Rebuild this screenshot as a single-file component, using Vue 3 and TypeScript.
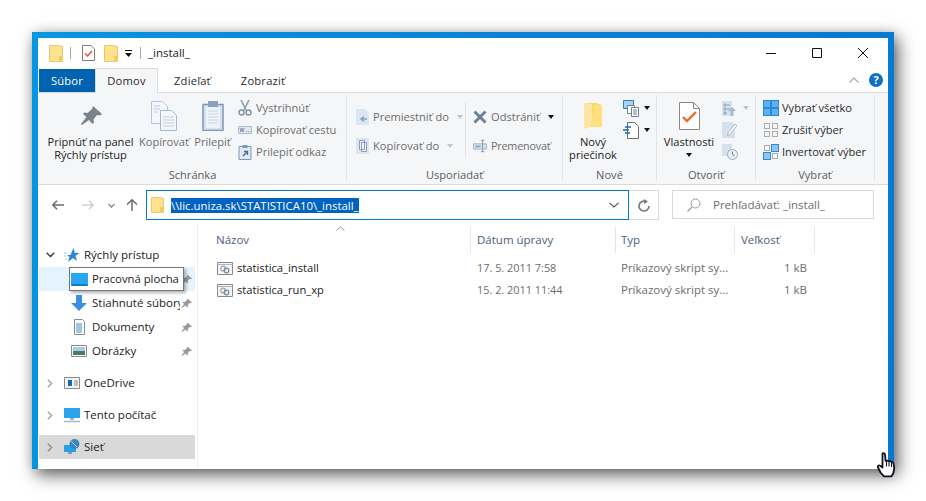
<script setup lang="ts">
const tools = [
  { label: 'Vybrať všetko', cells: ['#5fb0ee', '#5fb0ee', '#5fb0ee', '#5fb0ee'] },
  { label: 'Zrušiť výber', cells: ['none', 'none', 'none', 'none'] },
  { label: 'Invertovať výber', cells: ['none', '#8cc6f2', '#8cc6f2', 'none'] }
]
const files = [
  { name: 'statistica_install', date: '17. 5. 2011 7:58' },
  { name: 'statistica_run_xp', date: '15. 2. 2011 11:44' }
]
const cols = ['Názov', 'Dátum úpravy', 'Typ', 'Veľkosť']
const slots = [
  { x: 0.5, y: 0.5 },
  { x: 8.5, y: 0.5 },
  { x: 0.5, y: 8.5 },
  { x: 8.5, y: 8.5 }
]
</script>

<template>
  <div class="window">
    <div class="inner">
      <header class="titlebar">
        <svg width="14" height="17" viewBox="0 0 14 17"><path d="M.5.500h9l4 1v15H.5z" fill="#ffe28c" stroke="#e9c76e"/><path d="M10 11h3.500v5.500H10z" fill="#f4cd60"/></svg>
        <i class="tsep"></i>
        <svg width="13" height="16" viewBox="0 0 13 16"><path d="M.5.500h8.500l3.500 3.500v11.500H.5z" fill="#fff" stroke="#7d7d7d"/><path d="M3 8.500l2.500 2.500L10 6" fill="none" stroke="#e2572b" stroke-width="1.500"/></svg>
        <svg class="ic-q3" width="14" height="17" viewBox="0 0 14 17"><path d="M.5.500h9l4 1v15H.5z" fill="#ffe28c" stroke="#e9c76e"/><path d="M10 11h3.500v5.500H10z" fill="#f4cd60"/></svg>
        <svg class="ic-q4" width="7" height="7" viewBox="0 0 7 7"><path d="M0 0h7v1H0zM0 3h7L3.500 7z" fill="#111"/></svg>
        <i class="tsep tsep2"></i>
        <span class="wintitle">_install_</span>
        <div class="controls">
          <svg width="46" height="30" viewBox="0 0 46 30"><path d="M18 15.500h10" stroke="#111"/></svg>
          <svg width="46" height="30" viewBox="0 0 46 30"><path d="M18.500 10.500h9v9h-9z" fill="none" stroke="#111"/></svg>
          <svg width="46" height="30" viewBox="0 0 46 30"><path d="M18 10l10 10M28 10L18 20" stroke="#111"/></svg>
        </div>
      </header>

      <nav class="tabs">
        <span class="tab file">Súbor</span>
        <span class="tab active">Domov</span>
        <span class="tab share">Zdieľať</span>
        <span class="tab view">Zobraziť</span>
        <div class="tabs-right">
          <svg width="10" height="6" viewBox="0 0 10 6"><path d="M.5 5.500L5 1l4.500 4.500" fill="none" stroke="#a8a8a8" stroke-width="1.200"/></svg>
          <span class="help">?</span>
        </div>
      </nav>

      <section class="ribbon">
        <div class="group g1">
          <div class="body">
            <div class="big b-pin">
              <div class="bigicon"><svg width="22" height="20" viewBox="0 0 22 20"><path d="M13 0l9 8-2 1.500-3-.5-3.500 4.500.5 3-1.500 1.500-3.500-4L2 19l-1-1 5.500-7-3.500-3L4.500 6.500l3 .5L12 3z" fill="#7a838b"/></svg></div>
              <span>Pripnúť na panel</span><span>Rýchly prístup</span>
            </div>
            <div class="big b-copy dim">
              <div class="bigicon"><svg width="26" height="30" viewBox="0 0 26 30"><path d="M.5.500h11l5 5v17H.500z" fill="#f3f6fa" stroke="#b9c6d6"/><path d="M9.500 9.500h11l5 5v15h-16z" fill="#f3f6fa" stroke="#a9b9cd"/><path d="M12 16h11M12 19h11M12 22h11M12 25h11M3 5h6M3 8h6M3 11h4" stroke="#c2cedd"/></svg></div>
              <span>Kopírovať</span>
            </div>
            <div class="big b-paste dim">
              <div class="bigicon"><svg width="22" height="30" viewBox="0 0 22 30"><path d="M1 3.500h20v26H1z" fill="#d5e0ef" stroke="#7f97b6" stroke-width="1.500"/><path d="M4 6h14v21H4z" fill="#eef3f9"/><path d="M6 0h10v6H6z" fill="#8ba2bf"/><path d="M6 10h10M6 13h10M6 16h10M6 19h10M6 22h10" stroke="#c8d5e6"/></svg></div>
              <span>Prilepiť</span>
            </div>
            <div class="smalls s1">
              <div class="small dim"><svg width="14" height="16" viewBox="0 0 14 16"><path d="M3 0l5 10M11 0L6 10" stroke="#8d9db2" stroke-width="1.600"/><circle cx="3.500" cy="12.500" r="2.500" fill="none" stroke="#7c8fa8" stroke-width="1.400"/><circle cx="10.500" cy="12.500" r="2.500" fill="none" stroke="#7c8fa8" stroke-width="1.400"/></svg><span>Vystrihnúť</span></div>
              <div class="small dim"><svg width="14" height="8" viewBox="0 0 14 8"><path d="M.5.500h13v7H.5z" fill="#dfe8f3" stroke="#aebccd"/><path d="M2 2l1 4 1-4 1 4 1-4M8 5.500h1M10 5.500h1M12 5.500h.5" fill="none" stroke="#7c8a9c" stroke-width=".8"/></svg><span>Kopírovať cestu</span></div>
              <div class="small dim"><svg width="13" height="15" viewBox="0 0 13 15"><path d="M.5 1.500h12v13H.5z" fill="#dfe8f3" stroke="#7f97b6"/><path d="M4 0h5v3H4z" fill="#7f97b6"/><path d="M4.500 11L8 7.500M5.500 6.500H9v3.500" fill="none" stroke="#4f6785" stroke-width="1.300"/></svg><span>Prilepiť odkaz</span></div>
            </div>
          </div>
          <div class="glabel">Schránka</div>
        </div>

        <div class="group g2">
          <div class="body">
            <div class="tall c1">
              <div class="small dim"><svg width="13" height="16" viewBox="0 0 13 16"><path d="M0 0h9l4 4v12H0z" fill="#dce6f2"/><path d="M11 10H5M8 7.500L5 10l3 2.500" fill="none" stroke="#8da0b8" stroke-width="1.500"/></svg><span>Premiestniť do</span><i class="caret off"></i></div>
              <div class="small dim"><svg width="13" height="16" viewBox="0 0 13 16"><path d="M0 0h13v16H0z" fill="#dce6f2"/><path d="M3.500 2.500h5v9h-5zM5.500 4.500h5v9h-5z" fill="#eef3f9" stroke="#8da0b8"/></svg><span>Kopírovať do</span><i class="caret off"></i></div>
            </div>
            <i class="rsep"></i>
            <div class="tall c2">
              <div class="small dim"><svg width="14" height="14" viewBox="0 0 14 14"><path d="M1.500 1.500l11 11M12.500 1.500l-11 11" stroke="#6f8198" stroke-width="3"/></svg><span>Odstrániť</span><i class="caret"></i></div>
              <div class="small dim"><svg width="14" height="14" viewBox="0 0 16 14"><path d="M.5 4.500h15v6H.5z" fill="#d8e2ef" stroke="#9fb0c6"/><path d="M2.500 6.500h6v2h-6z" fill="#8fa3bc"/><path d="M9 .5h4M11 .5v13M9 13.500h4" stroke="#7e90a8" fill="none"/></svg><span class="rename">Premenovať</span></div>
            </div>
          </div>
          <div class="glabel">Usporiadať</div>
        </div>

        <div class="group g3">
          <div class="body">
            <div class="big b-new">
              <div class="bigicon"><svg width="19" height="27" viewBox="0 0 19 27"><path d="M0 0h12l6 2v22H0z" fill="#ffd766"/><path d="M0 0l8 1v22l-8 3z" fill="#fde6a1"/><path d="M11 2h7v22H6z" fill="#ffdf80"/></svg></div>
              <span>Nový</span><span>priečinok</span>
            </div>
            <div class="smalls s3">
              <div class="small"><svg width="16" height="17" viewBox="0 0 16 17"><path d="M.5.500h10v8H.5z" fill="#a9d1f0" stroke="#2f7fbc"/><path d="M4.500 5.500h7v8h-7z" fill="#fff" stroke="#6f8198"/><path d="M8.500 7.500h7v9h-7z" fill="#fff" stroke="#6f8198"/><path d="M10 10h4M10 12h4M10 14h4" stroke="#6f8198"/></svg><i class="caret"></i></div>
              <div class="small"><svg width="16" height="17" viewBox="0 0 16 17"><path d="M4.500.5h7l4 4v12h-11z" fill="#fff" stroke="#6d6d6d"/><path d="M2 5h6M0 8h6M2 11h5" stroke="#0f6cbd" stroke-width="1.300"/></svg><i class="caret"></i></div>
            </div>
          </div>
          <div class="glabel">Nové</div>
        </div>

        <div class="group g4">
          <div class="body">
            <div class="big b-props">
              <div class="bigicon"><svg width="21" height="28" viewBox="0 0 21 28"><path d="M.5.500h14l6 6v21H.5z" fill="#fff" stroke="#8a8a8a"/><path d="M14.500.5v6h6" fill="none" stroke="#8a8a8a"/><path d="M4 15l4 4 9-9" fill="none" stroke="#ef6a22" stroke-width="2.400"/></svg></div>
              <span>Vlastnosti</span>
              <i class="caret under"></i>
            </div>
            <div class="smalls s4">
              <div class="small"><svg width="14" height="15" viewBox="0 0 14 15"><path d="M0 0h10v15H0z" fill="#d6e1ee"/><path d="M2 3h2v2H2zM2 7h2v2H2zM2 11h2v2H2zM5 4h3M5 8h3" stroke="#92a5bd" fill="none"/><path d="M10 6l4 4h-2.500v5h-3v-5H6z" fill="#a8bace"/></svg><i class="caret off"></i></div>
              <div class="small"><svg width="15" height="16" viewBox="0 0 15 16"><path d="M0 0h10l3 3v13H0z" fill="#d6e1ee"/><path d="M6 11l7-9 2 1.500-7 9-2.500 1z" fill="#fff" stroke="#a8bace"/></svg></div>
              <div class="small"><svg width="16" height="16" viewBox="0 0 16 16"><path d="M0 0h10v12H0z" fill="#d6e1ee"/><circle cx="10.500" cy="10.500" r="5" fill="#e8eef5" stroke="#98abc1"/><path d="M10.500 7.500v3l2 1.500" fill="none" stroke="#6f8198"/></svg></div>
            </div>
          </div>
          <div class="glabel">Otvoriť</div>
        </div>

        <div class="group g5">
          <div class="body">
            <div class="smalls s5">
              <div v-for="t in tools" :key="t.label" class="small sel">
                <svg width="16" height="16" viewBox="0 0 16 16">
                  <template v-for="(s, i) in slots" :key="i">
                    <rect v-if="t.cells[i] === 'none'" :x="s.x + 1" :y="s.y + 1" width="5" height="5" fill="#f5f6f7" stroke="#ababab"/>
                    <rect v-else :x="s.x" :y="s.y" width="7" height="7" :fill="t.cells[i]" stroke="#2b8bd9"/>
                  </template>
                </svg>
                <span>{{ t.label }}</span>
              </div>
            </div>
          </div>
          <div class="glabel">Vybrať</div>
        </div>
      </section>

      <div class="addressrow">
        <div class="navbtns">
          <svg width="12" height="10" viewBox="0 0 12 10"><path d="M12 5H1M5 .7L.8 5 5 9.300" fill="none" stroke="#6b6b6b" stroke-width="1.500"/></svg>
          <svg width="12" height="10" viewBox="0 0 12 10"><path d="M0 5h11M7 .7L11.200 5 7 9.300" fill="none" stroke="#cfcfcf" stroke-width="1.500"/></svg>
          <svg width="7" height="5" viewBox="0 0 7 5"><path d="M.5.800L3.500 4l3-3.200" fill="none" stroke="#808080" stroke-width="1.200"/></svg>
          <svg width="12" height="12" viewBox="0 0 12 12"><path d="M6 12V1M1 5.500L6 .8l5 4.700" fill="none" stroke="#6b6b6b" stroke-width="1.500"/></svg>
        </div>
        <div class="address">
          <svg width="13" height="16" viewBox="0 0 13 16"><path d="M.5.500h8l4 1v14H.5z" fill="#ffe28c" stroke="#e9c76e"/><path d="M9 10h3.500v5.500H9z" fill="#f4cd60"/></svg>
          <span class="path">\\lic.uniza.sk\STATISTICA10\_install_</span>
          <svg class="dd" width="10" height="6" viewBox="0 0 10 6"><path d="M.5.800L5 5l4.500-4.200" fill="none" stroke="#555" stroke-width="1.100"/></svg>
        </div>
        <div class="refresh">
          <svg width="12" height="13" viewBox="0 0 12 13"><path d="M7.500 2.300A5 5 0 1 0 11 7" fill="none" stroke="#757575" stroke-width="1.600"/><path d="M6 0l4 2.500L6 5z" fill="#757575"/></svg>
        </div>
        <div class="search">
          <svg width="14" height="14" viewBox="0 0 14 14"><circle cx="8.500" cy="5.500" r="4.500" fill="none" stroke="#9a9a9a"/><path d="M5 9l-4.500 4.500" stroke="#9a9a9a" stroke-width="1.300"/></svg>
          <span>Prehľadávať: _install_</span>
        </div>
      </div>

      <div class="content">
        <aside class="tree">
          <div class="row">
            <span class="arrow"><svg class="chev-d" width="9" height="6" viewBox="0 0 9 6"><path d="M.7.800l3.800 3.800L8.300.8" fill="none" stroke="#3c3c3c" stroke-width="1.400"/></svg></span>
            <svg class="ni" width="16" height="16" viewBox="0 0 16 16"><path d="M9.500 1l1.200 4.700L15.500 6l-4 2.800L13 14 9 11 4 15l1.500-5L3 8h3.500z" fill="#2c87d8"/><path d="M0 6h3M0 9h2M1 12h2" stroke="#9fc9ee"/></svg>
            <span class="lbl">Rýchly prístup</span>
          </div>
          <div class="row sub hover">
            <span class="grow"></span>
            <svg class="pin" width="11" height="11" viewBox="0 0 22 20"><path d="M13 0l9 8-2 1.500-3-.5-3.500 4.500.5 3-1.500 1.500-3.500-4L2 19l-1-1 5.500-7-3.500-3L4.500 6.500l3 .5L12 3z" fill="#9b9b9b"/></svg>
            <div class="tooltip">
              <svg width="17" height="13" viewBox="0 0 17 13"><path d="M0 0h17v13H0z" fill="#1a9be8"/><path d="M0 0h17v11H0z" fill="#27a6f2"/><path d="M1 12h15" stroke="#0d5c96"/></svg>
              <span>Pracovná plocha</span>
            </div>
          </div>
          <div class="row sub">
            <span class="ind"></span>
            <svg class="ni" width="16" height="16" viewBox="0 0 16 16"><path d="M5 0h6v8h5l-8 8-8-8h5z" fill="#3a8fe0"/></svg>
            <span class="lbl clip">Stiahnuté súbory</span>
            <svg class="pin" width="11" height="11" viewBox="0 0 22 20"><path d="M13 0l9 8-2 1.500-3-.5-3.500 4.500.5 3-1.500 1.500-3.500-4L2 19l-1-1 5.500-7-3.500-3L4.500 6.500l3 .5L12 3z" fill="#9b9b9b"/></svg>
          </div>
          <div class="row sub">
            <span class="ind"></span>
            <svg class="ni" width="16" height="16" viewBox="0 0 16 16"><path d="M3.500.5h8l2 2v13h-10z" fill="#fff" stroke="#8a8a8a"/><path d="M5 5h6M5 7h6M5 9h6M5 11h6M5 13h6" stroke="#3a8fd0"/></svg>
            <span class="lbl">Dokumenty</span>
            <svg class="pin" width="11" height="11" viewBox="0 0 22 20"><path d="M13 0l9 8-2 1.500-3-.5-3.500 4.500.5 3-1.500 1.500-3.500-4L2 19l-1-1 5.500-7-3.500-3L4.500 6.500l3 .5L12 3z" fill="#9b9b9b"/></svg>
          </div>
          <div class="row sub">
            <span class="ind"></span>
            <svg class="ni" width="16" height="12" viewBox="0 0 16 12"><path d="M.5.500h15v11H.5z" fill="#fff" stroke="#8a8a8a"/><path d="M2 2h12v4H2z" fill="#a9cdea"/><path d="M2 6h12v4H2z" fill="#4e7b5d"/></svg>
            <span class="lbl">Obrázky</span>
            <svg class="pin" width="11" height="11" viewBox="0 0 22 20"><path d="M13 0l9 8-2 1.500-3-.5-3.500 4.500.5 3-1.500 1.500-3.500-4L2 19l-1-1 5.500-7-3.500-3L4.500 6.500l3 .5L12 3z" fill="#9b9b9b"/></svg>
          </div>
          <div class="row top">
            <span class="arrow"><svg class="chev-r" width="6" height="9" viewBox="0 0 6 9"><path d="M.8.700l3.800 3.800L.8 8.300" fill="none" stroke="#a0a0a0" stroke-width="1.300"/></svg></span>
            <svg class="ni" width="16" height="12" viewBox="0 0 16 12"><path d="M.5.500h15v11H.5z" fill="#f4f4f4" stroke="#8a8a8a"/><path d="M4 3h4v6H4z" fill="#0f6cbd"/><path d="M10 4h4M10 6h4M10 8h4" stroke="#8a8a8a"/></svg>
            <span class="lbl">OneDrive</span>
          </div>
          <div class="row top">
            <span class="arrow"><svg class="chev-r" width="6" height="9" viewBox="0 0 6 9"><path d="M.8.700l3.800 3.800L.8 8.300" fill="none" stroke="#a0a0a0" stroke-width="1.300"/></svg></span>
            <svg class="ni" width="16" height="15" viewBox="0 0 16 15"><path d="M0 0h16v10H0z" fill="#2aa3ea"/><path d="M6 10h4v2H6z" fill="#9fb5c8"/><path d="M0 13.500h16" stroke="#9fb5c8" stroke-width="1.500"/></svg>
            <span class="lbl">Tento počítač</span>
          </div>
          <div class="row top sel-row">
            <span class="arrow"><svg class="chev-r" width="6" height="9" viewBox="0 0 6 9"><path d="M.8.700l3.800 3.800L.8 8.300" fill="none" stroke="#8a8a8a" stroke-width="1.300"/></svg></span>
            <svg class="ni" width="16" height="16" viewBox="0 0 16 16"><path d="M0 6h12v7H0z" fill="#2a9fe3"/><path d="M4 13h4v2H4z" fill="#7f9db5"/><circle cx="10.500" cy="5" r="5" fill="#3b86bd"/><path d="M7 2l6 6" stroke="#a5d3ef"/></svg>
            <span class="lbl">Sieť</span>
          </div>
        </aside>

        <main class="files">
          <div class="sort"><svg width="9" height="5" viewBox="0 0 9 5"><path d="M.5 4.500l4-3.700 4 3.700" fill="none" stroke="#9a9a9a"/></svg></div>
          <div class="grid head">
            <div v-for="c in cols" :key="c" class="hcell">{{ c }}</div>
          </div>
          <div class="list">
            <div v-for="f in files" :key="f.name" class="grid frow">
              <div class="fname">
                <svg width="16" height="13" viewBox="0 0 16 13"><path d="M.5.500h15v12H.5z" fill="#f4f4f4" stroke="#8a8a8a"/><path d="M.5 2.500h15" stroke="#b5b5b5"/><circle cx="6" cy="6.500" r="2.300" fill="none" stroke="#8fa5ba" stroke-width="1.200"/><circle cx="9.500" cy="8.500" r="2.300" fill="none" stroke="#6f8ba5" stroke-width="1.200"/></svg>
                <span>{{ f.name }}</span>
              </div>
              <div class="fmeta date">{{ f.date }}</div>
              <div class="fmeta type">Príkazový skript sy...</div>
              <div class="fmeta size">1 kB</div>
            </div>
          </div>
        </main>
      </div>
    </div>
  </div>

  <svg class="cursor" width="20" height="26" viewBox="0 0 20 26"><path d="M5.500 1.500c1.200-.8 2.300 0 2.500 1.200l.6 6.300 1.200-.3 1.800.3 1.900.4 1.900.6 1.200 1.500.6 5-.8 4.500-1.900 3.300H7l-3.400-3.800L1 15.500c-.5-1.500.8-2.600 2.200-1.700l2.300 1.700z" fill="#fff" stroke="#10131c" stroke-width="1.800" stroke-linejoin="round"/><path d="M9.500 9.500v5M12 9.500v5M14.500 10v5" stroke="#10131c" stroke-width="1.100"/></svg>
</template>

<style>
html { background: #fff; overflow: hidden; }
body { min-height: 501px; }
</style>

<style scoped>
.window {
  position: relative;
  width: 862px;
  height: 437px;
  margin: 32px 0 0 32px;
  padding: 6px 6px 0;
  box-sizing: border-box;
  background: linear-gradient(100deg, #0596e2 0%, #0a84d6 45%, #0678d2 100%);
  box-shadow: 4px 6px 16px rgba(0, 0, 0, .62), 0 0 10px rgba(0, 0, 0, .1);
  font: 11.5px/14px "Open Sans", sans-serif;
  color: #2b2b2b;
}
.inner {
  height: 431px;
  background: #fff;
  display: flex;
  flex-direction: column;
}
.titlebar {
  height: 30px;
  flex: none;
  display: flex;
  align-items: center;
  padding-left: 11px;
}
.tsep { width: 1px; height: 12px; background: #a8a8a8; margin: 0 11px 0 7px; }
.ic-q3 { margin-left: 9px; }
.ic-q4 { margin: 1px 0 0 7px; }
.tsep2 { margin: 0 7px 0 8px; }
.wintitle { font-size: 11.5px; color: #1a1a1a; }
.controls { margin-left: auto; display: flex; height: 30px; padding-right: 2px; }

.tabs {
  height: 25px;
  flex: none;
  box-sizing: border-box;
  display: flex;
  align-items: flex-end;
  border-bottom: 1px solid #dadbdc;
  padding-left: 1px;
  font-size: 11.2px;
}
.tab { height: 23px; line-height: 23px; text-align: center; letter-spacing: .2px; }
.file { width: 56px; background: #0063b1; color: #fff; }
.active {
  width: 63px;
  height: 25px;
  line-height: 24px;
  box-sizing: border-box;
  background: #f5f6f7;
  border: 1px solid #dadbdc;
  border-bottom: 0;
  margin-bottom: -1px;
}
.share { margin-left: 16px; }
.view { margin-left: 30px; }
.tabs-right {
  margin-left: auto;
  height: 24px;
  display: flex;
  align-items: center;
  gap: 10px;
  padding-right: 5px;
}
.help {
  width: 14px;
  height: 14px;
  border-radius: 50%;
  background: #0f70c8;
  color: #fff;
  font: bold 11px/14px "Open Sans", sans-serif;
  text-align: center;
}

.ribbon {
  height: 92px;
  flex: none;
  box-sizing: border-box;
  display: flex;
  background: #f5f6f7;
  border-bottom: 1px solid #dadbdc;
  padding: 2px 0 0 1px;
  font-size: 11.1px;
}
.group {
  height: 86px;
  box-sizing: border-box;
  border-right: 1px solid #e1e3e6;
  display: flex;
  flex-direction: column;
}
.body { flex: 1; display: flex; min-height: 0; }
.glabel { text-align: center; line-height: 14px; margin-bottom: -1px; color: #5c5c5c; }
.g1 { width: 308px; }
.g2 { width: 216px; }
.g3 { width: 94px; }
.g4 { width: 99px; }
.g5 { width: 119px; }
.g1 .body { padding-left: 6px; }
.g2 .body { padding-left: 9px; }
.g4 .body { padding-left: 4px; }
.g5 .body { padding-left: 7px; }

.big {
  display: flex;
  flex-direction: column;
  align-items: center;
  flex: none;
  line-height: 13px;
  white-space: nowrap;
}
.bigicon { height: 40px; padding-top: 2px; box-sizing: border-box; display: flex; align-items: center; flex: none; }
.b-pin { width: 91px; color: #222; }
.b-copy { width: 50px; margin-left: 3px; }
.b-paste { width: 37px; margin-left: 5px; }
.b-new { width: 60px; color: #222; }
.b-props { width: 56px; color: #222; }
.dim { color: #6d6d6d; }
.rename { letter-spacing: -.2px; margin-left: 0; font-size: 10.8px; }
.smalls { padding-top: 2px; display: flex; flex-direction: column; }
.s1 { margin-left: 7px; }
.small {
  height: 22px;
  display: flex;
  align-items: center;
  gap: 4px;
  white-space: nowrap;
}
.small svg { flex: none; }
.s1 .small svg { width: 14px; }
.sel { color: #2b2b2b; gap: 3px; }
.tall { padding-top: 7px; display: flex; flex-direction: column; }
.tall .small { height: 29px; }
.c1 { width: 109px; flex: none; }
.rsep { width: 1px; height: 55px; margin: 7px 7px 0 0; background: #e1e3e6; flex: none; }
.caret {
  width: 0;
  height: 0;
  border: 3.5px solid transparent;
  border-top: 4px solid #111;
  border-bottom: 0;
  margin-left: 4px;
  flex: none;
}
.caret.off { border-top-color: #c4c4c4; }
.under { margin: 5px 0 0; }
.s3 .small { gap: 1px; }
.s4 { margin-left: 5px; }
.s4 .small { gap: 3px; }

.addressrow {
  height: 37px;
  flex: none;
  box-sizing: border-box;
  display: flex;
  padding-top: 5px;
  align-items: flex-start;
}
.navbtns {
  width: 108px;
  height: 30px;
  flex: none;
  box-sizing: border-box;
  padding-left: 14px;
  display: flex;
  align-items: center;
  justify-content: flex-start;
  gap: 18px;
}
.navbtns svg:nth-child(3) { margin-left: -4px; }
.navbtns svg:nth-child(4) { margin-left: -7px; }
.address {
  width: 483px;
  height: 30px;
  flex: none;
  box-sizing: border-box;
  border: 1px solid #0078d7;
  display: flex;
  align-items: center;
  padding-left: 4px;
  font-size: 11.4px;
}
.path {
  margin-left: 7px;
  background: #0063c1;
  color: #fff;
  height: 15px;
  line-height: 15px;
  white-space: nowrap;
}
.dd { margin-left: auto; margin-right: 9px; }
.refresh {
  width: 30px;
  height: 30px;
  flex: none;
  box-sizing: border-box;
  border: 1px solid #d9d9d9;
  border-left: 0;
  display: flex;
  align-items: center;
  justify-content: center;
}
.search {
  width: 202px;
  height: 29px;
  flex: none;
  margin-left: 13px;
  box-sizing: border-box;
  border: 1px solid #d9d9d9;
  display: flex;
  align-items: center;
  padding-left: 14px;
  gap: 12px;
  color: #6d6d6d;
}

.content { flex: 1; display: flex; min-height: 0; }
.tree {
  width: 160px;
  flex: none;
  box-sizing: border-box;
  padding: 21px 2px 0 1px;
  border-right: 1px solid #f0f0f0;
}
.row {
  position: relative;
  height: 24px;
  display: flex;
  align-items: center;
  padding-right: 3px;
  white-space: nowrap;
}
.top { margin-top: 8px; }
.arrow { width: 25px; flex: none; display: flex; align-items: center; }
.chev-d { margin-left: 7px; }
.chev-r { margin-left: 8px; }
.ind { width: 32px; flex: none; }
.ni { flex: none; margin-right: 4px; }
.sub .ni { margin-right: 5px; }
.lbl { color: #222; }
.clip { width: 88px; overflow: hidden; flex: none; }
.pin { margin-left: auto; flex: none; }
.grow { flex: 1; }
.hover { background: #e5f3ff; }
.sel-row { background: #d9d9d9; }
.tooltip {
  position: absolute;
  left: 30px;
  top: 0;
  width: 115px;
  height: 24px;
  box-sizing: border-box;
  background: #fff;
  border: 1px solid #767676;
  box-shadow: 2px 2px 3px rgba(0, 0, 0, .3);
  display: flex;
  align-items: center;
  padding-left: 1px;
  gap: 4px;
  color: #222;
  font-size: 11.3px;
}

.files { flex: 1; position: relative; min-width: 0; padding-top: 5px; }
.sort { position: absolute; left: 138px; top: 4px; line-height: 0; }
.grid { display: grid; grid-template-columns: 272px 145px 119px 80px; }
.head { height: 26px; }
.hcell {
  padding-left: 7px;
  line-height: 26px;
  color: #4c607a;
  border-right: 1px solid #e5e5e5;
  margin-right: -1px;
}
.hcell:first-child { padding-left: 18px; }
.hcell:nth-child(3) { padding-left: 6px; }
.list { padding-top: 4px; }
.frow { height: 22px; align-items: center; }
.fname { display: flex; align-items: center; gap: 4px; padding-left: 19px; color: #222; font-size: 11.2px; }
.fmeta { color: #6d6d6d; white-space: nowrap; }
.date { padding-left: 7px; font-size: 10.9px; }
.type { padding-left: 6px; }
.size { text-align: right; padding-right: 7px; }

.cursor { position: absolute; left: 877px; top: 452px; }
</style>
